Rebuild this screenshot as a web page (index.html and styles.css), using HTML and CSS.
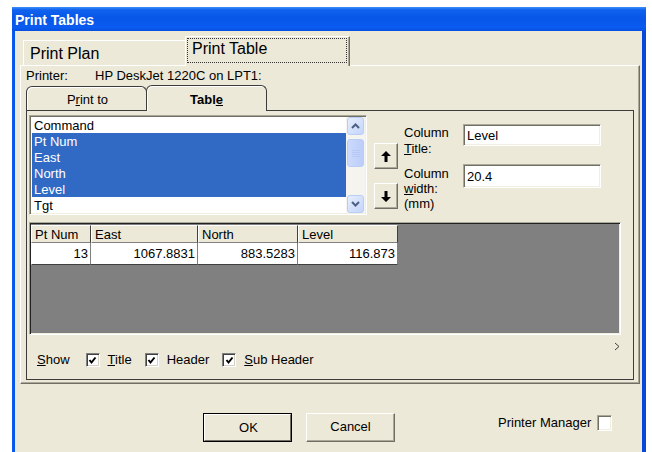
FILE: index.html
```html
<!DOCTYPE html>
<html>
<head>
<meta charset="utf-8">
<title>Print Tables</title>
<link rel="stylesheet" href="styles.css">
</head>
<body>
<div class="window">
  <div class="titlebar">Print Tables</div>
  <div class="client">
    <div class="otabs">
      <div class="otab">Print Plan</div>
      <div class="otab active"><div class="focus">Print Table</div></div>
    </div>
    <div class="opanel">
      <div class="printer"><span class="plabel">Printer:</span><span>HP DeskJet 1220C on LPT1:</span></div>
      <div class="itabs">
        <div class="itab">P<u>r</u>int to</div>
        <div class="itab active">Tabl<u>e</u></div>
      </div>
      <div class="ipanel">
        <div class="toprow">
          <div class="listbox">
            <div class="items">
              <div class="item">Command</div>
              <div class="item sel">Pt Num</div>
              <div class="item sel">East</div>
              <div class="item sel">North</div>
              <div class="item sel">Level</div>
              <div class="item">Tgt</div>
            </div>
            <div class="vscroll">
              <div class="sbtn"><svg width="9" height="6" viewBox="0 0 9 6"><path d="M1 5 L4.5 1.5 L8 5" fill="none" stroke="#4d6185" stroke-width="2"/></svg></div>
              <div class="track">
                <div class="thumb"><svg width="8" height="8" viewBox="0 0 8 8"><path d="M0 1.5H8M0 3.5H8M0 5.5H8M0 7.5H8" stroke="#b6c9f5" stroke-width="1"/></svg></div>
              </div>
              <div class="sbtn"><svg width="9" height="6" viewBox="0 0 9 6"><path d="M1 1 L4.5 4.5 L8 1" fill="none" stroke="#4d6185" stroke-width="2"/></svg></div>
            </div>
          </div>
          <div class="movers">
            <div class="mv"><svg width="10" height="11" viewBox="0 0 10 11"><path d="M5 0 L10 5 H6.5 V11 H3.5 V5 H0 Z" fill="#000"/></svg></div>
            <div class="mv down"><svg width="10" height="11" viewBox="0 0 10 11"><path d="M5 11 L10 6 H6.5 V0 H3.5 V6 H0 Z" fill="#000"/></svg></div>
          </div>
          <div class="props">
            <div class="prop first">
              <div class="plab">Column<br><u>T</u>itle:</div>
              <div class="field">Level</div>
            </div>
            <div class="prop second">
              <div class="plab">Column<br><u>w</u>idth:<br>(mm)</div>
              <div class="field tall">20.4</div>
            </div>
          </div>
        </div>
        <div class="grid">
          <table class="sheet">
            <tr class="head">
              <th class="c1">Pt Num</th><th class="c2">East</th><th class="c3">North</th><th class="c4">Level</th>
            </tr>
            <tr class="data">
              <td>13</td><td>1067.8831</td><td>883.5283</td><td>116.873</td>
            </tr>
          </table>
        </div>
        <div class="more"><svg width="6" height="9" viewBox="0 0 6 9"><path d="M1 1 L5 4.5 L1 8" fill="none" stroke="#404040" stroke-width="1"/></svg></div>
        <div class="showrow">
          <span class="slabel"><u>S</u>how</span>
          <span class="cb checked"><svg width="9" height="9" viewBox="0 0 9 9"><path d="M1.5 4 L3.5 6.5 L7.5 1.5" fill="none" stroke="#000" stroke-width="2"/></svg></span>
          <span class="clabel"><u>T</u>itle</span>
          <span class="cb checked"><svg width="9" height="9" viewBox="0 0 9 9"><path d="M1.5 4 L3.5 6.5 L7.5 1.5" fill="none" stroke="#000" stroke-width="2"/></svg></span>
          <span class="clabel">Header</span>
          <span class="cb checked"><svg width="9" height="9" viewBox="0 0 9 9"><path d="M1.5 4 L3.5 6.5 L7.5 1.5" fill="none" stroke="#000" stroke-width="2"/></svg></span>
          <span class="clabel"><u>S</u>ub Header</span>
        </div>
      </div>
    </div>
    <div class="footer">
      <div class="btn default"><span>OK</span></div>
      <div class="btn">Cancel</div>
      <div class="pm">Printer Manager</div>
      <span class="pmbox"></span>
    </div>
  </div>
</div>
</body>
</html>
```

FILE: styles.css
```css
* { box-sizing: border-box; }

html, body {
  margin: 0;
  padding: 0;
  background: #fff;
}

body {
  font: 13px/16px "Liberation Sans", Arial, sans-serif;
  color: #000;
}

/* window frame */
.window {
  margin: 7px 0 0 12px;
  width: 634px;
  height: 445px;
  background: linear-gradient(90deg, #0a5ff2 0, #0853e0 3px, #0848d8 100%);
  display: flex;
  flex-direction: column;
}

.titlebar {
  height: 24px;
  line-height: 27px;
  padding-left: 3px;
  color: #fff;
  font-weight: bold;
  font-size: 14px;
  overflow: hidden;
  background: linear-gradient(180deg, #3d8ff8 0%, #0f62ee 12%, #0856e8 45%, #0a5bf0 85%, #0650e0 100%);
}

.client {
  flex: 1;
  margin: 0 4px 0 3px;
  background: #ece9d8;
}

/* outer tab strip */
.otabs {
  display: flex;
  align-items: flex-end;
  padding-left: 8px;
  margin-top: 5px;
  height: 29px;
  font-size: 16px;
  line-height: 18px;
}

.otab {
  width: 162px;
  height: 25px;
  padding: 4px 0 0 6px;
  border-top: 1px solid #fff;
  border-left: 1px solid #fff;
}

.otab.active {
  position: relative;
  z-index: 1;
  width: 165px;
  height: 30px;
  margin-bottom: -1px;
  padding: 1px 0 0 1px;
  background: #ece9d8;
  border-right: 1px solid #716f64;
  box-shadow: inset -1px 0 #aca899;
}

.focus {
  width: 160px;
  height: 25px;
  padding: 1px 0 0 4px;
  border: 1px dotted #333;
}

/* outer page */
.opanel {
  margin-left: 5px;
  width: 620px;
  height: 319px;
  padding: 0 5px 3px 5px;
  border-top: 1px solid #fff;
  border-left: 1px solid #fff;
  border-right: 1px solid #716f64;
  border-bottom: 1px solid #716f64;
  box-shadow: inset -1px -1px #aca899;
}

.printer {
  height: 16px;
  display: flex;
  margin-top: 2px;
}

.plabel { width: 69px; }

/* inner tab strip */
.itabs {
  display: flex;
  align-items: flex-end;
  margin-top: 1px;
  height: 25px;
}

.itab {
  width: 121px;
  height: 24px;
  border: 1px solid #3c3c3c;
  border-bottom: none;
  border-radius: 6px 6px 0 0;
  text-align: center;
  padding-top: 5px;
  padding-left: 2px;
  box-shadow: inset 1px 1px #fff;
}

.itab.active {
  position: relative;
  z-index: 1;
  margin-left: -1px;
  height: 26px;
  margin-bottom: -1px;
  background: #ece9d8;
  font-weight: bold;
  padding-top: 6px;
  padding-left: 0;
}

.ipanel {
  width: 608px;
  height: 270px;
  border: 1px solid #3c3c3c;
  padding: 4px 0 0 2px;
  display: flex;
  flex-direction: column;
}

.toprow {
  display: flex;
  align-items: flex-start;
  height: 100px;
}

/* list box */
.listbox {
  display: flex;
  width: 338px;
  height: 100px;
  background: #fff;
  border-top: 1px solid #aca899;
  border-left: 1px solid #aca899;
  border-right: 1px solid #fff;
  border-bottom: 1px solid #fff;
  box-shadow: inset 1px 1px #716f64, inset -1px -1px #f1efe2;
  padding: 1px;
}

.items {
  flex: 1;
  padding-left: 1px;
}

.item {
  height: 16px;
  line-height: 17px;
  padding-left: 2px;
}

.item.sel {
  background: #316ac5;
  color: #fff;
}

.vscroll {
  width: 19px;
  display: flex;
  flex-direction: column;
  background: #f5f4ee;
  padding: 0 1px;
}

.sbtn {
  height: 18px;
  border: 1px solid #b8cdf8;
  border-radius: 3px;
  background: linear-gradient(135deg, #e6eefe, #c4d5fb);
  display: flex;
  align-items: center;
  justify-content: center;
}

.track {
  flex: 1;
  padding-top: 4px;
}

.thumb {
  height: 28px;
  border: 1px solid #b8cdf8;
  border-radius: 3px;
  background: linear-gradient(90deg, #cbdafc, #bccdf9);
  display: flex;
  align-items: center;
  justify-content: center;
}

/* reorder buttons */
.movers {
  margin-left: 7px;
  padding-top: 28px;
  display: flex;
  flex-direction: column;
  gap: 14px;
}

.mv {
  width: 24px;
  height: 26px;
  background: #ece9d8;
  border-top: 1px solid #fff;
  border-left: 1px solid #fff;
  border-right: 1px solid #716f64;
  border-bottom: 1px solid #716f64;
  box-shadow: inset -1px -1px #aca899;
  display: flex;
  align-items: center;
  justify-content: center;
}

.props {
  margin-left: 6px;
  display: flex;
  flex-direction: column;
}

.prop {
  display: flex;
  align-items: flex-start;
}

.prop.first { margin-top: 9px; height: 40px; }

.plab {
  width: 59px;
  line-height: 16px;
  margin-top: 1px;
}

.second .plab { line-height: 15px; margin-top: 2px; }

.field {
  width: 138px;
  height: 22px;
  background: #fff;
  border-top: 1px solid #aca899;
  border-left: 1px solid #aca899;
  border-right: 1px solid #fff;
  border-bottom: 1px solid #fff;
  box-shadow: inset 1px 1px #716f64, inset -1px -1px #f1efe2;
  padding: 3px 0 0 3px;
}

.field.tall { height: 24px; padding-top: 4px; }

/* table preview */
.grid {
  margin-top: 7px;
  width: 592px;
  height: 113px;
  background: #808080;
  border-top: 1px solid #aca899;
  border-left: 1px solid #aca899;
  border-right: 1px solid #fff;
  border-bottom: 1px solid #fff;
  box-shadow: inset 1px 1px #222, inset -1px -1px #f1efe2;
  padding: 2px 0 0 1px;
}

.sheet {
  border-collapse: separate;
  border-spacing: 0;
  font: inherit;
}

.sheet th {
  height: 17px;
  background: #ece9d8;
  font-weight: normal;
  text-align: left;
  padding: 1px 0 0 3px;
  border-top: 1px solid #fff;
  border-left: 1px solid #fff;
  border-right: 1px solid #404040;
  border-bottom: 1px solid #808080;
  line-height: 15px;
}

.c1 { width: 60px; }
.c2 { width: 107px; }
.c3 { width: 100px; }
.c4 { width: 100px; }

.sheet td {
  height: 22px;
  background: #fff;
  text-align: right;
  padding: 1px 2px 0 0;
  border-right: 1px solid #808080;
  border-bottom: 1px solid #404040;
  line-height: 20px;
}

.sheet td:first-child { border-left: 1px solid #fff; }

.more {
  height: 9px;
  margin-top: 7px;
  display: flex;
  justify-content: flex-end;
  padding-right: 13px;
}

/* visibility options */
.showrow {
  display: flex;
  align-items: center;
  height: 16px;
  margin-top: 1px;
  padding-left: 8px;
}

.slabel { margin-right: 16px; }

.cb {
  width: 14px;
  height: 14px;
  background: #fff;
  border-top: 1px solid #808080;
  border-left: 1px solid #808080;
  border-right: 1px solid #fff;
  border-bottom: 1px solid #fff;
  box-shadow: inset 1px 1px #404040, inset -1px -1px #d4d0c8;
  display: flex;
  align-items: center;
  justify-content: center;
}

.cb + .clabel { margin-left: 8px; margin-right: 13px; }

u { text-decoration: underline; text-underline-offset: 1px; }

/* dialog buttons */
.footer {
  display: flex;
  align-items: flex-start;
  padding: 29px 0 0 188px;
}

.btn {
  width: 89px;
  height: 29px;
  background: #ece9d8;
  border-top: 1px solid #fff;
  border-left: 1px solid #fff;
  border-right: 1px solid #716f64;
  border-bottom: 1px solid #716f64;
  box-shadow: inset -1px -1px #aca899;
  text-align: center;
  line-height: 26px;
  margin-right: 14px;
}

.btn.default {
  border: 1px solid #000;
  padding: 0;
}

.btn.default span {
  display: block;
  height: 27px;
  border-top: 1px solid #fff;
  border-left: 1px solid #fff;
  border-right: 1px solid #716f64;
  border-bottom: 1px solid #716f64;
  line-height: 25px;
  padding-left: 2px;
}

.pm {
  margin-left: 89px;
  margin-top: 2px;
}

.pmbox {
  margin-left: 6px;
  margin-top: 2px;
  width: 15px;
  height: 16px;
  background: #fff;
  border-top: 1px solid #aca899;
  border-left: 1px solid #aca899;
  border-right: 1px solid #fff;
  border-bottom: 1px solid #fff;
  box-shadow: inset 1px 1px #716f64, inset -1px -1px #f1efe2;
}
```
